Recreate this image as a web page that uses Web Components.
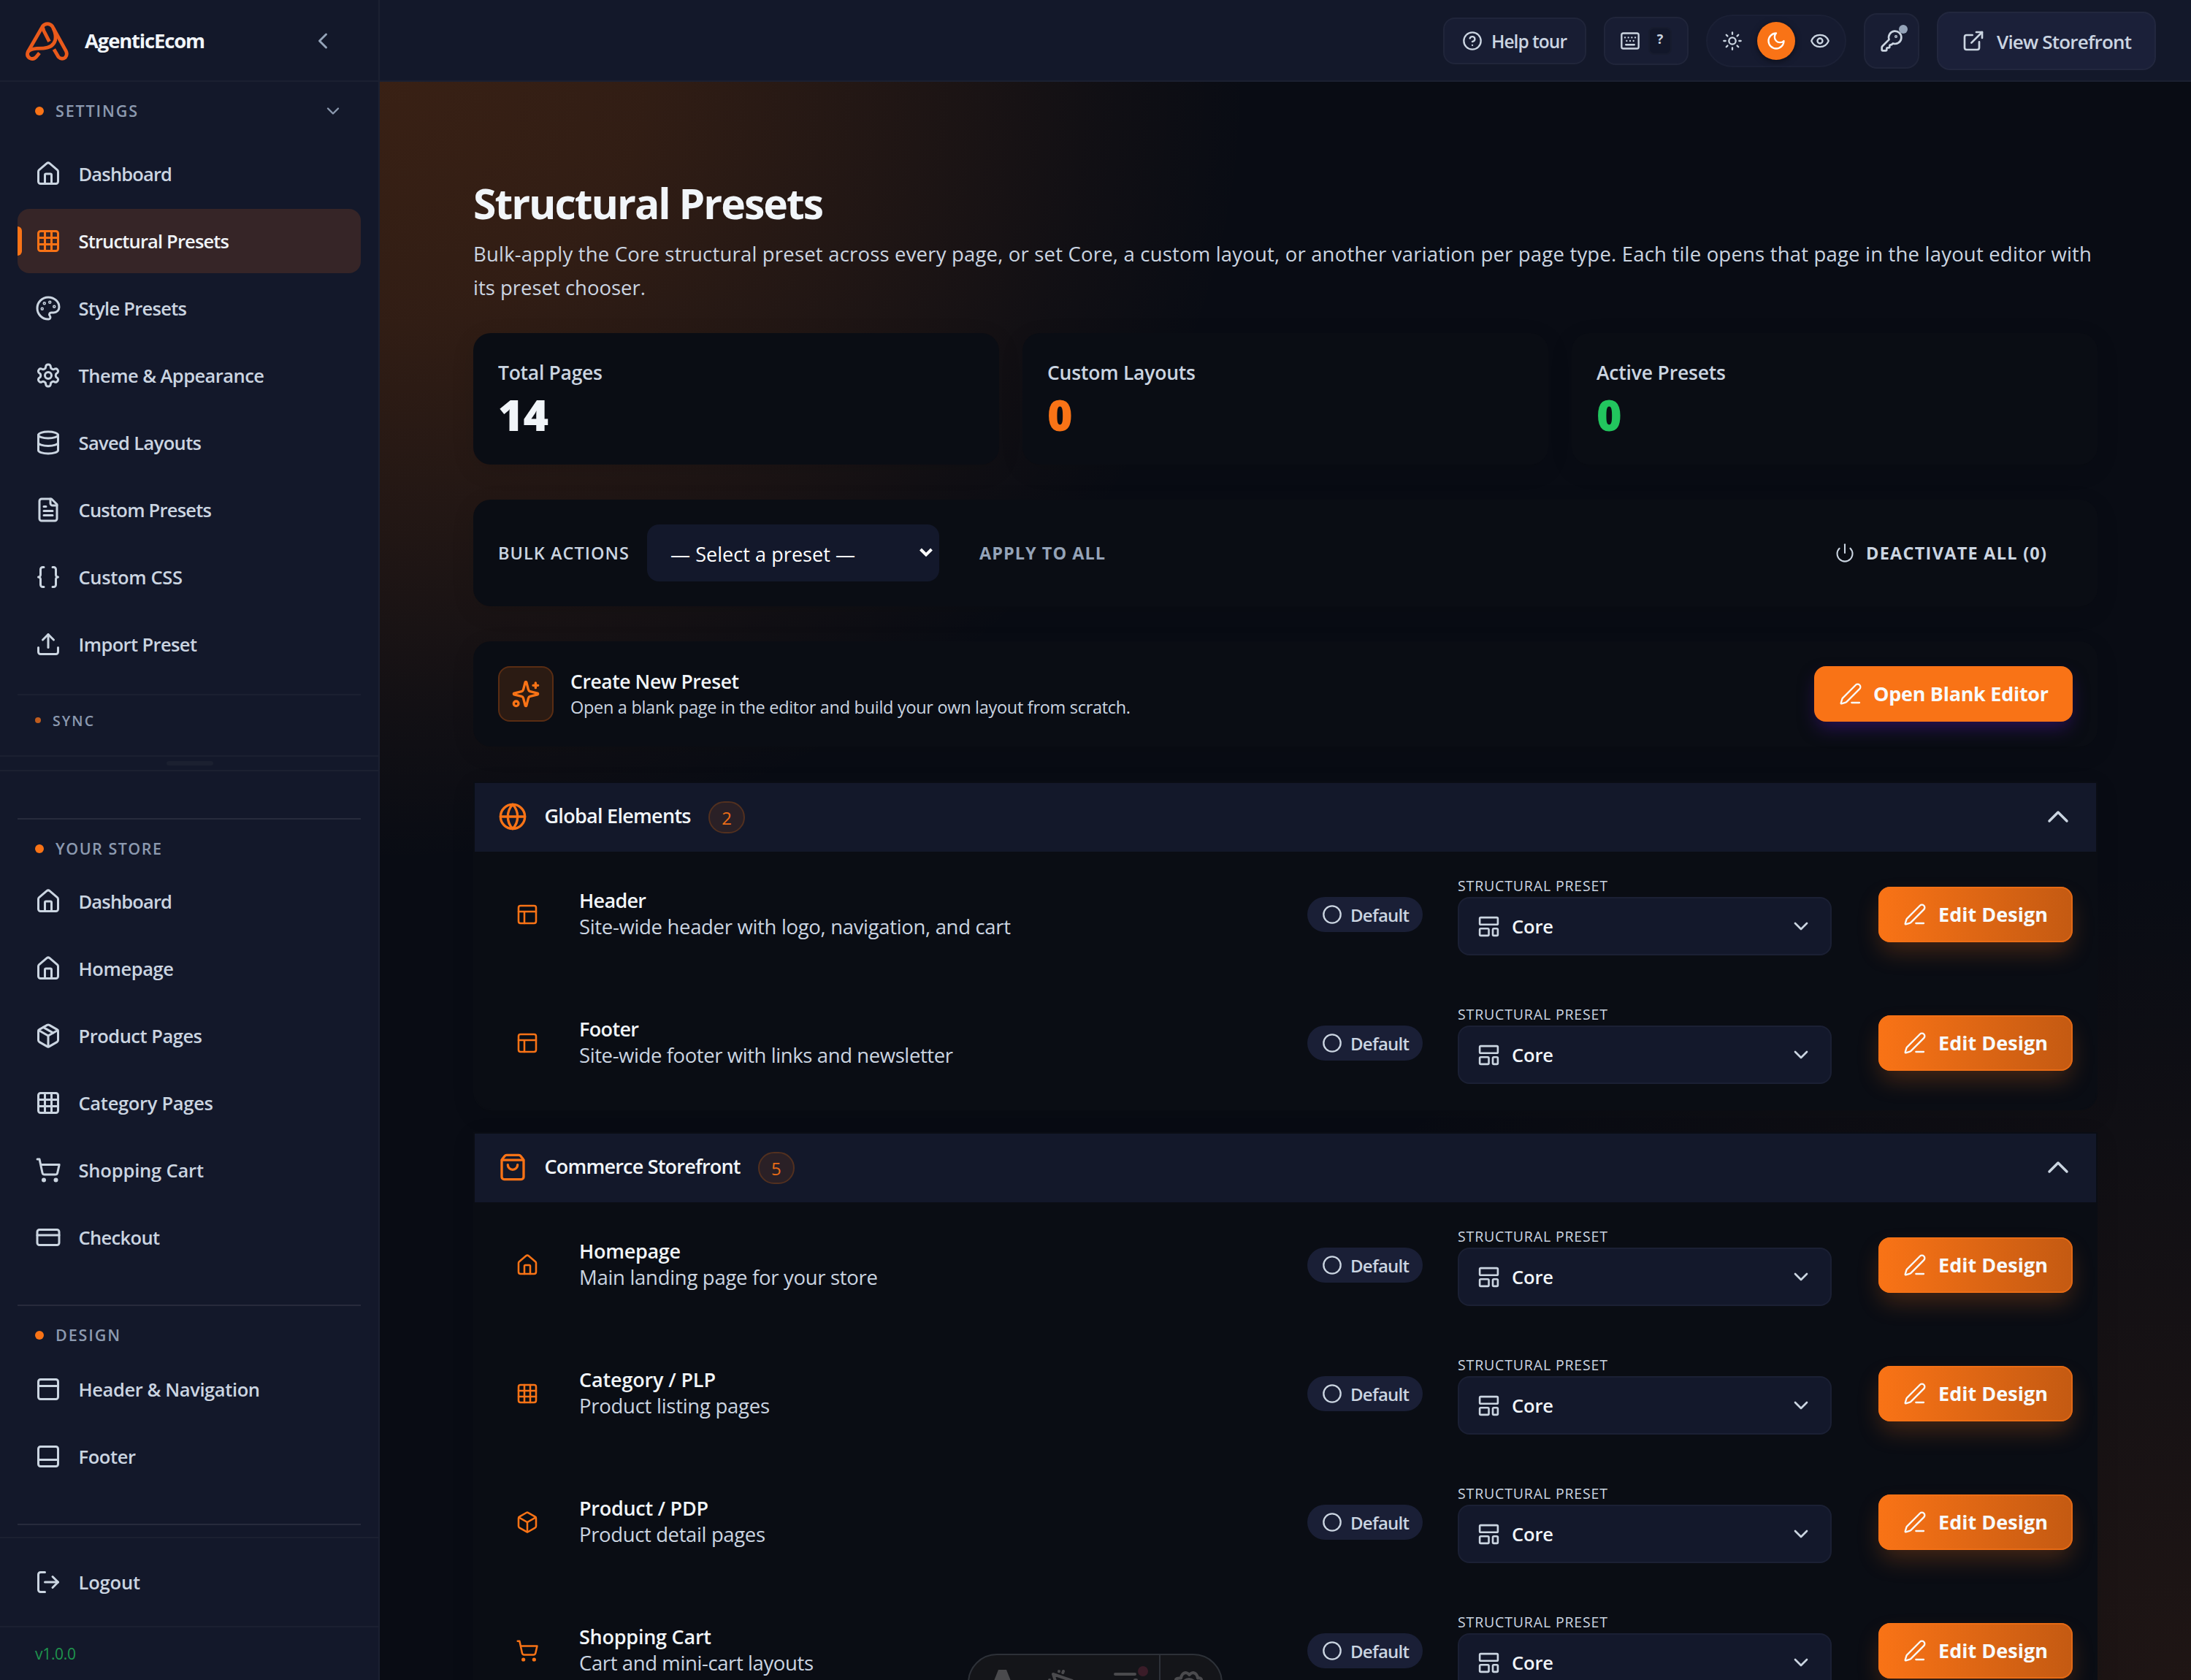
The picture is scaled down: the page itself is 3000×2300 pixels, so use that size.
<!DOCTYPE html>
<html lang="en">
<head>
<meta charset="utf-8">
<title>Structural Presets - AgenticEcom</title>
<style>
  html, body { margin: 0; height: 2300px; overflow: hidden; background: #090c14; }
  body { font-family: "Open Sans", "Noto Sans", sans-serif; color: #cbd5e1; }
</style>
</head>
<body>
<app-shell></app-shell>
<script>
const ICONS = {
  home: '<path d="M15 21v-8a1 1 0 0 0-1-1h-4a1 1 0 0 0-1 1v8"/><path d="M3 10a2 2 0 0 1 .709-1.528l7-6a2 2 0 0 1 2.582 0l7 6A2 2 0 0 1 21 10v9a2 2 0 0 1-2 2H5a2 2 0 0 1-2-2z"/>',
  grid: '<rect width="18" height="18" x="3" y="3" rx="2"/><path d="M3 9h18M3 15h18M9 3v18M15 3v18"/>',
  palette: '<path d="M12 22a1 1 0 0 1 0-20 10 9 0 0 1 10 9 5 5 0 0 1-5 5h-2.250a1.750 1.750 0 0 0-1.400 2.800l.3.4a1.750 1.750 0 0 1-1.400 2.800z"/><circle cx="13.500" cy="6.500" r=".5"/><circle cx="17.500" cy="10.500" r=".5"/><circle cx="6.500" cy="12.500" r=".5"/><circle cx="8.500" cy="7.500" r=".5"/>',
  gear: '<path d="M12.220 2h-.44a2 2 0 0 0-2 2v.18a2 2 0 0 1-1 1.730l-.43.25a2 2 0 0 1-2 0l-.15-.08a2 2 0 0 0-2.730.73l-.22.38a2 2 0 0 0 .73 2.730l.15.1a2 2 0 0 1 1 1.720v.51a2 2 0 0 1-1 1.740l-.15.09a2 2 0 0 0-.73 2.730l.22.38a2 2 0 0 0 2.730.73l.15-.08a2 2 0 0 1 2 0l.43.25a2 2 0 0 1 1 1.730V20a2 2 0 0 0 2 2h.44a2 2 0 0 0 2-2v-.18a2 2 0 0 1 1-1.730l.43-.25a2 2 0 0 1 2 0l.15.08a2 2 0 0 0 2.730-.73l.22-.39a2 2 0 0 0-.73-2.730l-.15-.08a2 2 0 0 1-1-1.740v-.5a2 2 0 0 1 1-1.740l.15-.09a2 2 0 0 0 .73-2.730l-.22-.38a2 2 0 0 0-2.730-.73l-.15.08a2 2 0 0 1-2 0l-.43-.25a2 2 0 0 1-1-1.730V4a2 2 0 0 0-2-2z"/><circle cx="12" cy="12" r="3"/>',
  database: '<ellipse cx="12" cy="5" rx="9" ry="3"/><path d="M3 5v14a9 3 0 0 0 18 0V5"/><path d="M3 12a9 3 0 0 0 18 0"/>',
  file: '<path d="M15 2H6a2 2 0 0 0-2 2v16a2 2 0 0 0 2 2h12a2 2 0 0 0 2-2V7z"/><path d="M14 2v4a2 2 0 0 0 2 2h4"/><path d="M10 9H8M16 13H8M16 17H8"/>',
  braces: '<path d="M8 3H7a2 2 0 0 0-2 2v5a2 2 0 0 1-2 2 2 2 0 0 1 2 2v5a2 2 0 0 0 2 2h1"/><path d="M16 21h1a2 2 0 0 0 2-2v-5a2 2 0 0 1 2-2 2 2 0 0 1-2-2V5a2 2 0 0 0-2-2h-1"/>',
  upload: '<path d="M21 15v4a2 2 0 0 1-2 2H5a2 2 0 0 1-2-2v-4"/><path d="m17 8-5-5-5 5"/><path d="M12 3v12"/>',
  package: '<path d="M11 21.730a2 2 0 0 0 2 0l7-4A2 2 0 0 0 21 16V8a2 2 0 0 0-1-1.730l-7-4a2 2 0 0 0-2 0l-7 4A2 2 0 0 0 3 8v8a2 2 0 0 0 1 1.730z"/><path d="M12 22V12"/><path d="M3.290 7 12 12l8.710-5"/><path d="m7.500 4.270 9 5.150"/>',
  box: '<path d="M21 8a2 2 0 0 0-1-1.730l-7-4a2 2 0 0 0-2 0l-7 4A2 2 0 0 0 3 8v8a2 2 0 0 0 1 1.730l7 4a2 2 0 0 0 2 0l7-4A2 2 0 0 0 21 16z"/><path d="m3.300 7 8.700 5 8.700-5"/><path d="M12 22V12"/>',
  cart: '<circle cx="8" cy="21" r="1"/><circle cx="19" cy="21" r="1"/><path d="M2.050 2.050h2l2.660 12.420a2 2 0 0 0 2 1.580h9.780a2 2 0 0 0 1.950-1.570l1.650-7.430H5.120"/>',
  card: '<rect width="20" height="14" x="2" y="5" rx="2"/><path d="M2 10h20"/>',
  paneltop: '<rect width="18" height="18" x="3" y="3" rx="2"/><path d="M3 9h18"/>',
  panelbottom: '<rect width="18" height="18" x="3" y="3" rx="2"/><path d="M3 15h18"/>',
  logout: '<path d="m16 17 5-5-5-5"/><path d="M21 12H9"/><path d="M9 21H5a2 2 0 0 1-2-2V5a2 2 0 0 1 2-2h4"/>',
  left: '<path d="m15 18-6-6 6-6"/>',
  down: '<path d="m6 9 6 6 6-6"/>',
  up: '<path d="m18 15-6-6-6 6"/>',
  help: '<circle cx="12" cy="12" r="10"/><path d="M9.090 9a3 3 0 0 1 5.830 1c0 2-3 3-3 3"/><path d="M12 17h.01"/>',
  keyboard: '<rect x="2" y="3" width="20" height="18" rx="2"/><path d="M6 8h.01M10 8h.01M14 8h.01M18 8h.01M8 12h.01M12 12h.01M16 12h.01M7 16.500h10"/>',
  sun: '<circle cx="12" cy="12" r="4"/><path d="M12 2v2M12 20v2M4.930 4.930l1.410 1.410M17.660 17.660l1.410 1.410M2 12h2M20 12h2M6.340 17.660l-1.410 1.410M19.070 4.930l-1.410 1.410"/>',
  moon: '<path d="M12 3a6 6 0 0 0 9 9 9 9 0 1 1-9-9Z"/>',
  eye: '<path d="M2.062 12.348a1 1 0 0 1 0-.696 10.750 10.750 0 0 1 19.876 0 1 1 0 0 1 0 .696 10.750 10.750 0 0 1-19.876 0"/><circle cx="12" cy="12" r="3"/>',
  key: '<path d="M2.586 17.414A2 2 0 0 0 2 18.828V21a1 1 0 0 0 1 1h3a1 1 0 0 0 1-1v-1a1 1 0 0 1 1-1h1a1 1 0 0 0 1-1v-1a1 1 0 0 1 1-1h.172a2 2 0 0 0 1.414-.586l.814-.814a6.500 6.500 0 1 0-4-4z"/><circle cx="16.500" cy="7.500" r=".5"/>',
  external: '<path d="M15 3h6v6"/><path d="M10 14 21 3"/><path d="M18 13v6a2 2 0 0 1-2 2H5a2 2 0 0 1-2-2V8a2 2 0 0 1 2-2h6"/>',
  power: '<path d="M12 2v10"/><path d="M18.400 6.600a9 9 0 1 1-12.770.04"/>',
  sparkles: '<path d="M9.937 15.500A2 2 0 0 0 8.500 14.063l-6.135-1.582a.5.5 0 0 1 0-.962L8.500 9.936A2 2 0 0 0 9.937 8.500l1.582-6.135a.5.5 0 0 1 .963 0L14.063 8.500A2 2 0 0 0 15.500 9.937l6.135 1.581a.5.5 0 0 1 0 .964L15.500 14.063a2 2 0 0 0-1.437 1.437l-1.582 6.135a.5.5 0 0 1-.963 0z"/><path d="M20 3v4M22 5h-4"/><circle cx="4" cy="20" r="2"/>',
  pen: '<path d="M13 21h8"/><path d="M21.174 6.812a1 1 0 0 0-3.986-3.987L3.842 16.174a2 2 0 0 0-.5.83l-1.321 4.352a.5.5 0 0 0 .623.622l4.353-1.320a2 2 0 0 0 .83-.497z"/>',
  globe: '<circle cx="12" cy="12" r="10"/><path d="M12 2a14.500 14.500 0 0 0 0 20 14.500 14.500 0 0 0 0-20"/><path d="M2 12h20"/>',
  bag: '<path d="M16 10a4 4 0 0 1-8 0"/><path d="M3.103 6.034h17.794"/><path d="M3.400 5.467a2 2 0 0 0-.4 1.200V20a2 2 0 0 0 2 2h14a2 2 0 0 0 2-2V6.667a2 2 0 0 0-.4-1.200l-2-2.667A2 2 0 0 0 17 2H7a2 2 0 0 0-1.600.8z"/>',
  layout: '<rect width="18" height="18" x="3" y="3" rx="2"/><path d="M3 9h18M9 21V9"/>',
  circle: '<circle cx="12" cy="12" r="10"/>',
  template: '<rect width="18" height="7" x="3" y="3" rx="1"/><rect width="9" height="7" x="3" y="14" rx="1"/><rect width="5" height="7" x="16" y="14" rx="1"/>'
};

function define(name, render, after) {
  customElements.define(name, class extends HTMLElement {
    connectedCallback() {
      if (this.shadowRoot) return;
      this.attachShadow({ mode: 'open' }).innerHTML = render(n => this.getAttribute(n) || '', this);
      if (after) after(this);
    }
  });
}

/* Single-line label tracked out or in so that it fills the width "w". */
define('fit-text', () => `<style>:host{display:inline-block;white-space:nowrap;flex:none;width:max-content}</style><slot></slot>`, el => {
  const w = parseFloat(el.getAttribute('w'));
  if (!w) return;
  const gap = (w - el.getBoundingClientRect().width) / Math.max(1, el.textContent.length - 1);
  el.style.letterSpacing = gap.toFixed(3) + 'px';
  el.style.marginRight = (-gap).toFixed(3) + 'px';
});

/* Stroked 24-unit icon: name, size, stroke width. */
define('ui-icon', a => `<style>:host{display:block;flex:none;line-height:0}</style>
<svg width="${a('s') || 36}" height="${a('s') || 36}" viewBox="0 0 24 24" fill="none" stroke="currentColor" stroke-width="${a('t') || 2}" stroke-linecap="round" stroke-linejoin="round">${ICONS[a('n')]}</svg>`);

define('nav-item', a => `<style>
:host{display:flex;align-items:center;box-sizing:border-box;height:88px;margin:0 24px 4px;padding-left:24px;gap:23.500px;border-radius:16px;
font-size:25.500px;line-height:36px;font-weight:600;color:#cbd5e1;position:relative}
:host([active]){background:#362527;color:#f1f5f9}
:host([active]) ui-icon{color:#f97316}
:host([active])::before{content:"";position:absolute;left:0;top:24px;width:6px;height:40px;background:#f97316;border-radius:0 6px 6px 0}
</style><ui-icon n="${a('icon')}"></ui-icon><fit-text w="${a('w') - 1.5}">${a('label')}</fit-text>`);

define('nav-heading', a => `<style>
:host{display:flex;align-items:center;padding:0 48px 0 48px;height:32px;gap:16px;font-size:21.500px;font-weight:600;color:#8c9ab0;line-height:32px}
i{width:12px;height:12px;border-radius:50%;background:#f97316;flex:none}
ui-icon{margin-left:auto}
:host([small]) i{width:8px;height:8px;background:#bf5c1d}
:host([small]){font-size:19.500px}
:host([small]) fit-text{padding-top:2px}
</style><i></i><fit-text w="${a('w')}">${a('label')}</fit-text>${a('chev') ? '<ui-icon n="down" s="28"></ui-icon>' : ''}`);

define('app-sidebar', () => `<style>
:host{display:flex;flex-direction:column;box-sizing:border-box;width:520px;height:2300px;background:#13182a;border-right:2px solid #1b2031;flex:none}
.brand{display:flex;align-items:center;border-bottom:2px solid #1b2031;padding:2px 58px 0 33px;box-sizing:border-box;height:112px;
font-size:27.500px;font-weight:700;color:#f1f5f9;line-height:40px}
.brand svg{margin-right:19px;flex:none}
.brand ui-icon{margin-left:auto;color:#94a3b8}
.sep{height:2px;background:#272b3c;margin:0 24px;flex:none}
.thin{height:2px;background:#1b2031;flex:none}
.handle{height:18px;display:flex;justify-content:center;align-items:center;padding-left:2px}
.handle i{width:64px;height:6px;border-radius:3px;background:#1b2030}
.ver{padding:20px 48px;font-size:21px;line-height:32px;color:#1f954e;font-weight:500}
</style>
<div class="brand">
<svg width="64" height="57" viewBox="90 76 180 160" fill="none" stroke="#ea5a1b" stroke-width="13.500" stroke-linejoin="round">
<path d="M149 201 L137 216 Q127 228 112 221 Q98 212 105 196 L161 99 Q168 89 180 89 Q192 89 199 99 L251 193 Q258 207 249 218 Q235 229 222 216 L205 187"/>
<path d="M104 198 Q113 186 138 184 L164 183 Q201 181 210 152 Q214 131 203 107"/><path d="M162 103 L166 116 L187 157"/></svg>
<fit-text w="165">AgenticEcom</fit-text><ui-icon n="left" s="36"></ui-icon></div>
<nav-heading style="margin:24px 0 26px" label="SETTINGS" w="112" chev="1"></nav-heading>
<nav-item icon="home" label="Dashboard" w="130"></nav-item>
<nav-item active icon="grid" label="Structural Presets" w="208"></nav-item>
<nav-item icon="palette" label="Style Presets" w="150"></nav-item>
<nav-item icon="gear" label="Theme &amp;amp; Appearance" w="256"></nav-item>
<nav-item icon="database" label="Saved Layouts" w="170"></nav-item>
<nav-item icon="file" label="Custom Presets" w="184"></nav-item>
<nav-item icon="braces" label="Custom CSS" w="144"></nav-item>
<nav-item icon="upload" label="Import Preset" w="164"></nav-item>
<div class="sep" style="background:#1b2031;margin-top:20px"></div>
<nav-heading small style="margin:18px 0 32px" label="SYNC" w="56"></nav-heading>
<div class="thin"></div><div class="handle"><i></i></div><div class="thin"></div>
<div class="sep" style="margin-top:64px"></div>
<nav-heading style="margin:24px 0 12px" label="YOUR STORE" w="145"></nav-heading>
<nav-item icon="home" label="Dashboard" w="130"></nav-item>
<nav-item icon="home" label="Homepage" w="132"></nav-item>
<nav-item icon="package" label="Product Pages" w="171"></nav-item>
<nav-item icon="grid" label="Category Pages" w="186"></nav-item>
<nav-item icon="cart" label="Shopping Cart" w="173"></nav-item>
<nav-item icon="card" label="Checkout" w="113"></nav-item>
<div class="sep" style="margin-top:44px"></div>
<nav-heading style="margin:24px 0 14px" label="DESIGN" w="88"></nav-heading>
<nav-item icon="paneltop" label="Header &amp;amp; Navigation" w="250"></nav-item>
<nav-item icon="panelbottom" label="Footer" w="80"></nav-item>
<div class="sep" style="margin-top:44px"></div>
<div class="thin" style="margin-top:16px"></div>
<nav-item style="margin-top:16px;margin-bottom:16px" icon="logout" label="Logout" w="86"></nav-item>
<div class="thin"></div>
<div class="ver"><fit-text w="56">v1.0.0</fit-text></div>`);

define('app-topbar', () => `<style>
:host{display:flex;box-sizing:border-box;height:112px;background:#13182a;border-bottom:2px solid #1b2031;align-items:center;justify-content:flex-end;
gap:24px;padding:2px 48px 0 0;font-weight:600;color:#cbd5e1;flex:none}
div{box-sizing:border-box;display:flex;align-items:center;background:#181d33;border:2px solid #20253a;border-radius:16px}
.help{width:196px;height:64px;padding-left:24px;gap:12px;font-size:24.500px;line-height:34px}
.kbd{width:116px;height:66px;padding-left:20px;gap:11px}
kbd{width:32px;height:38px;box-sizing:border-box;border-radius:8px;background:#12172a;border:2px solid #171c2e;font:700 18px/28px "Open Sans",sans-serif;text-align:center}
.theme{width:192px;height:72px;border-radius:36px;background:#161b30;border-color:#1b2035;padding-left:8px}
.theme span{width:52px;height:52px;border-radius:50%;display:grid;place-items:center;margin-right:8px}
.theme span.on{background:#f97316;color:#fff;box-shadow:0 2px 8px rgba(0,0,0,.5)}
.key{width:76px;height:76px;border-radius:18px;justify-content:center;position:relative}
.key i{position:absolute;left:46px;top:14px;width:12px;height:12px;border-radius:50%;background:#94a3b8}
.view{width:300px;height:80px;background:#1b2039;border-color:#22273e;padding-left:32px;gap:16px;font-size:26px;line-height:36px;border-radius:18px}
.help fit-text,.view fit-text{padding-top:1px}
</style>
<div class="help"><ui-icon n="help" s="28"></ui-icon><fit-text w="104">Help tour</fit-text></div>
<div class="kbd"><ui-icon n="keyboard" s="28"></ui-icon><kbd>?</kbd></div>
<div class="theme"><span><ui-icon n="sun" s="28"></ui-icon></span><span class="on"><ui-icon n="moon" s="28"></ui-icon></span><span><ui-icon n="eye" s="28"></ui-icon></span></div>
<div class="key"><ui-icon n="key" s="32"></ui-icon><i></i></div>
<div class="view"><ui-icon n="external" s="32"></ui-icon><fit-text w="185">View Storefront</fit-text></div>`);

define('stat-card', a => `<style>
:host{display:block;box-sizing:border-box;flex:1;height:180px;background:#0a0d14;border-radius:24px;padding:36px 34px 0;box-shadow:0 8px 32px rgba(0,0,0,.1);
font-size:26.500px;line-height:36px;font-weight:600;color:#cbd5e1}
b{display:block;font-size:59px;line-height:64px;margin-top:7px;color:${a('color')}}
</style><fit-text w="${a('w')}">${a('label')}</fit-text><b>${a('value')}</b>`);

define('cta-button', a => `<style>
:host{display:flex;box-sizing:border-box;height:76px;align-items:center;gap:16px;padding-left:34px;border-radius:16px;color:#f8fafc;font-size:27px;line-height:38px;font-weight:700;flex:none;
width:266px;background:linear-gradient(90deg,#f97316,#c45a12);box-shadow:inset 0 0 0 2px rgba(249,115,22,.6),0 16px 32px -4px rgba(249,115,22,.25)}
:host([solid]){width:354px;gap:15px;background:#f97316;box-shadow:0 12px 24px -4px rgba(67,20,140,.55)}
</style><ui-icon n="pen" s="32" t="1.75"></ui-icon><fit-text w="${a('w')}">${a('label')}</fit-text>`);

define('preset-row', a => `<style>
:host{display:flex;align-items:center;height:172px;padding:0 32px 4px 56px}
.ic{color:#f97316;margin-right:55px}
.txt{display:flex;flex-direction:column;align-items:flex-start;flex:1;font-size:27.500px;line-height:36px;padding-bottom:3px}
.txt .t{font-size:27px;font-weight:600;color:#f1f5f9}
.pill{display:flex;align-items:center;box-sizing:border-box;width:158px;height:48px;border-radius:24px;background:#1a1f36;padding-left:20px;gap:11px;font-size:24px;line-height:34px;font-weight:600;margin-right:48px}
.pill fit-text{padding-top:1px}
.field{width:512px;height:112px;margin-right:64px;display:flex;flex-direction:column;justify-content:flex-end;align-items:stretch;font-size:19.500px;line-height:28px}
.field>fit-text{margin-bottom:1px}
.sel{box-sizing:border-box;height:80px;flex:none;border:2px solid #1b2034;border-radius:16px;background:#13182b;display:flex;align-items:center;padding:0 24px;gap:15px;font-size:25.500px;font-weight:600;color:#f1f5f9}
.sel ui-icon{color:#cbd5e1}.sel ui-icon:last-child{margin-left:auto}
</style>
<ui-icon class="ic" n="${a('icon')}" s="32" t="1.9"></ui-icon>
<div class="txt"><fit-text class="t" w="${a('w1') - 1}">${a('label')}</fit-text><fit-text w="${a('w2') - 0}">${a('desc')}</fit-text></div>
<div class="pill"><ui-icon n="circle" s="28"></ui-icon><fit-text w="81">Default</fit-text></div>
<div class="field"><fit-text w="205">STRUCTURAL PRESET</fit-text>
<div class="sel"><ui-icon n="template" s="33" t="1.9"></ui-icon><fit-text w="57">Core</fit-text><ui-icon n="down" s="32"></ui-icon></div></div>
<cta-button w="150" label="Edit Design"></cta-button>`);

define('preset-section', a => `<style>
:host{display:block;border:2px solid #0a0d14;background:#0a0d14;border-radius:0 0 24px 24px;margin-bottom:30px;box-shadow:0 8px 32px rgba(0,0,0,.1)}
header{display:flex;align-items:center;height:94px;box-sizing:border-box;background:#13182a;padding:0 28px 2px 32px;font-size:27px;line-height:38px;font-weight:600;color:#f1f5f9}
header ui-icon:first-child{color:#f97316;margin-right:23.500px}
header fit-text{padding-bottom:3px}
.n{box-sizing:border-box;width:50px;height:44px;border-radius:22px;border:2px solid #52301f;background:#2a2026;color:#ec6d17;font-size:24px;line-height:41px;text-align:center;font-weight:400;margin:1px auto 0 23.500px}
header ui-icon:last-child{color:#cbd5e1}
</style><header><ui-icon n="${a('icon')}" s="40"></ui-icon><fit-text w="${a('w') - 1}">${a('label')}</fit-text><span class="n">${a('count')}</span><ui-icon n="up" s="48" t="1.75"></ui-icon></header><slot></slot>`);

define('dev-toolbar', () => `<style>
:host{position:absolute;left:1325px;top:2264px;width:350px;height:36px;overflow:hidden;display:block}
div{box-sizing:border-box;width:349px;height:80px;border:2px solid #2d3138;border-radius:44px;background:#141519}
svg{position:absolute;left:0;top:0}
</style><div></div><svg width="350" height="36" fill="none" stroke="#4a4a4d" stroke-width="4" stroke-linecap="round" stroke-linejoin="round">
<path d="M263 2v34" stroke="#2d3138" stroke-width="2"/>
<path d="M36 37l6-15h11l6 15z" fill="#4a4a4d" stroke="none"/>
<path d="M121 40l-4-12 26 9M125 24v.2M131 24l-.7 2M112 36h.2"/>
<path d="M202 28h27M229 36h2"/><circle cx="240" cy="24" r="7" fill="#3a1c28" stroke="none"/>
<path d="M285 37q-1-4 7-3.500q1-6.500 6-7.500q3 0 5.500 3q2.500-3 5.500-3q5 1 6 7.500q6-1 5 4M295 39q8-8 16 0"/></svg>`);

define('app-shell', () => `<style>
:host{display:flex;width:3000px;height:2300px;overflow:hidden;position:relative;line-height:1.4}
.main{flex:1;display:flex;flex-direction:column;min-width:0;
background:radial-gradient(ellipse 1190px 1070px at 0 112px,rgba(249,115,22,.2),rgba(249,115,22,.168) 30%,rgba(249,115,22,.1) 57%,rgba(249,115,22,.035) 82%,transparent),radial-gradient(ellipse 1500px 1120px at 100% 100%,rgba(249,115,22,.09),transparent),#090c14}
.body{padding:130px 128px 0;display:flex;flex-direction:column}
h1{margin:0;font-size:57px;line-height:72px;font-weight:700;color:#f1f5f9}
.p{font-size:27.500px;line-height:46px;display:flex;flex-direction:column;align-items:flex-start;margin:11px 0 0}
.stats{display:flex;gap:32px;margin-top:39px}
.panel{display:flex;align-items:center;box-sizing:border-box;background:#0a0d14;border-radius:24px;padding:0 34px;box-shadow:0 8px 32px rgba(0,0,0,.1);margin-top:48px}
.bulk{height:146px;font-size:23.500px;font-weight:600}
.select{display:flex;align-items:center;box-sizing:border-box;width:400px;height:78px;border-radius:16px;background:#13182b;margin:0 55px 0 25px;padding:0 9px 0 32px;font-size:27px;font-weight:400;color:#fff;justify-content:space-between}
.select fit-text{padding-top:3px}
.apply{font-weight:700;color:#94a3b8}
.off{display:flex;align-items:center;gap:15px;font-weight:700;margin-right:36px;margin-left:auto}
.create{height:144px;margin-bottom:48px}
.ib{width:76px;height:76px;box-sizing:border-box;border:2px solid #5a2d13;background:#2b1b13;border-radius:16px;display:grid;place-items:center;color:#f97316;margin-right:23px}
.ct{display:flex;flex-direction:column;align-items:flex-start;flex:1;font-size:23.500px;line-height:34px;padding-bottom:1px}
.ct .t{font-size:26.500px;line-height:36px;font-weight:600;color:#f1f5f9}
</style>
<app-sidebar></app-sidebar>
<div class="main"><app-topbar></app-topbar>
<div class="body">
<h1><fit-text w="480">Structural Presets</fit-text></h1>
<div class="p"><fit-text w="2216">Bulk-apply the Core structural preset across every page, or set Core, a custom layout, or another variation per page type. Each tile opens that page in the layout editor with</fit-text><fit-text w="236">its preset chooser.</fit-text></div>
<div class="stats"><stat-card label="Total Pages" w="143" value="14" color="#f1f5f9"></stat-card><stat-card label="Custom Layouts" w="203" value="0" color="#f97316"></stat-card><stat-card label="Active Presets" w="177" value="0" color="#22c55e"></stat-card></div>
<div class="panel bulk"><fit-text w="179">BULK ACTIONS</fit-text>
<div class="select"><fit-text w="253">— Select a preset —</fit-text><svg width="18" height="14" viewBox="0 0 18 14" fill="none" stroke="#fff" stroke-width="4"><path d="M1.500 2 9 9.500 16.500 2"/></svg></div>
<fit-text class="apply" w="172">APPLY TO ALL</fit-text>
<div class="off"><ui-icon n="power" s="28" t="1.75"></ui-icon><fit-text w="247">DEACTIVATE ALL (0)</fit-text></div></div>
<div class="panel create"><div class="ib"><ui-icon n="sparkles" s="40"></ui-icon></div>
<div class="ct"><fit-text class="t" w="231">Create New Preset</fit-text><fit-text w="767">Open a blank page in the editor and build your own layout from scratch.</fit-text></div>
<cta-button solid w="240" label="Open Blank Editor"></cta-button></div>
<preset-section icon="globe" label="Global Elements" w="202" count="2">
<preset-row icon="layout" label="Header" w1="93" desc="Site-wide header with logo, navigation, and cart" w2="591"></preset-row>
<preset-row icon="layout" label="Footer" w1="83" desc="Site-wide footer with links and newsletter" w2="512"></preset-row>
</preset-section>
<preset-section icon="bag" label="Commerce Storefront" w="270" count="5">
<preset-row icon="home" label="Homepage" w1="140" desc="Main landing page for your store" w2="409"></preset-row>
<preset-row icon="grid" label="Category / PLP" w1="188" desc="Product listing pages" w2="261"></preset-row>
<preset-row icon="box" label="Product / PDP" w1="178" desc="Product detail pages" w2="255"></preset-row>
<preset-row icon="cart" label="Shopping Cart" w1="182" desc="Cart and mini-cart layouts" w2="321"></preset-row>
</preset-section>
</div></div>
<dev-toolbar></dev-toolbar>`);
</script>
</body>
</html>
